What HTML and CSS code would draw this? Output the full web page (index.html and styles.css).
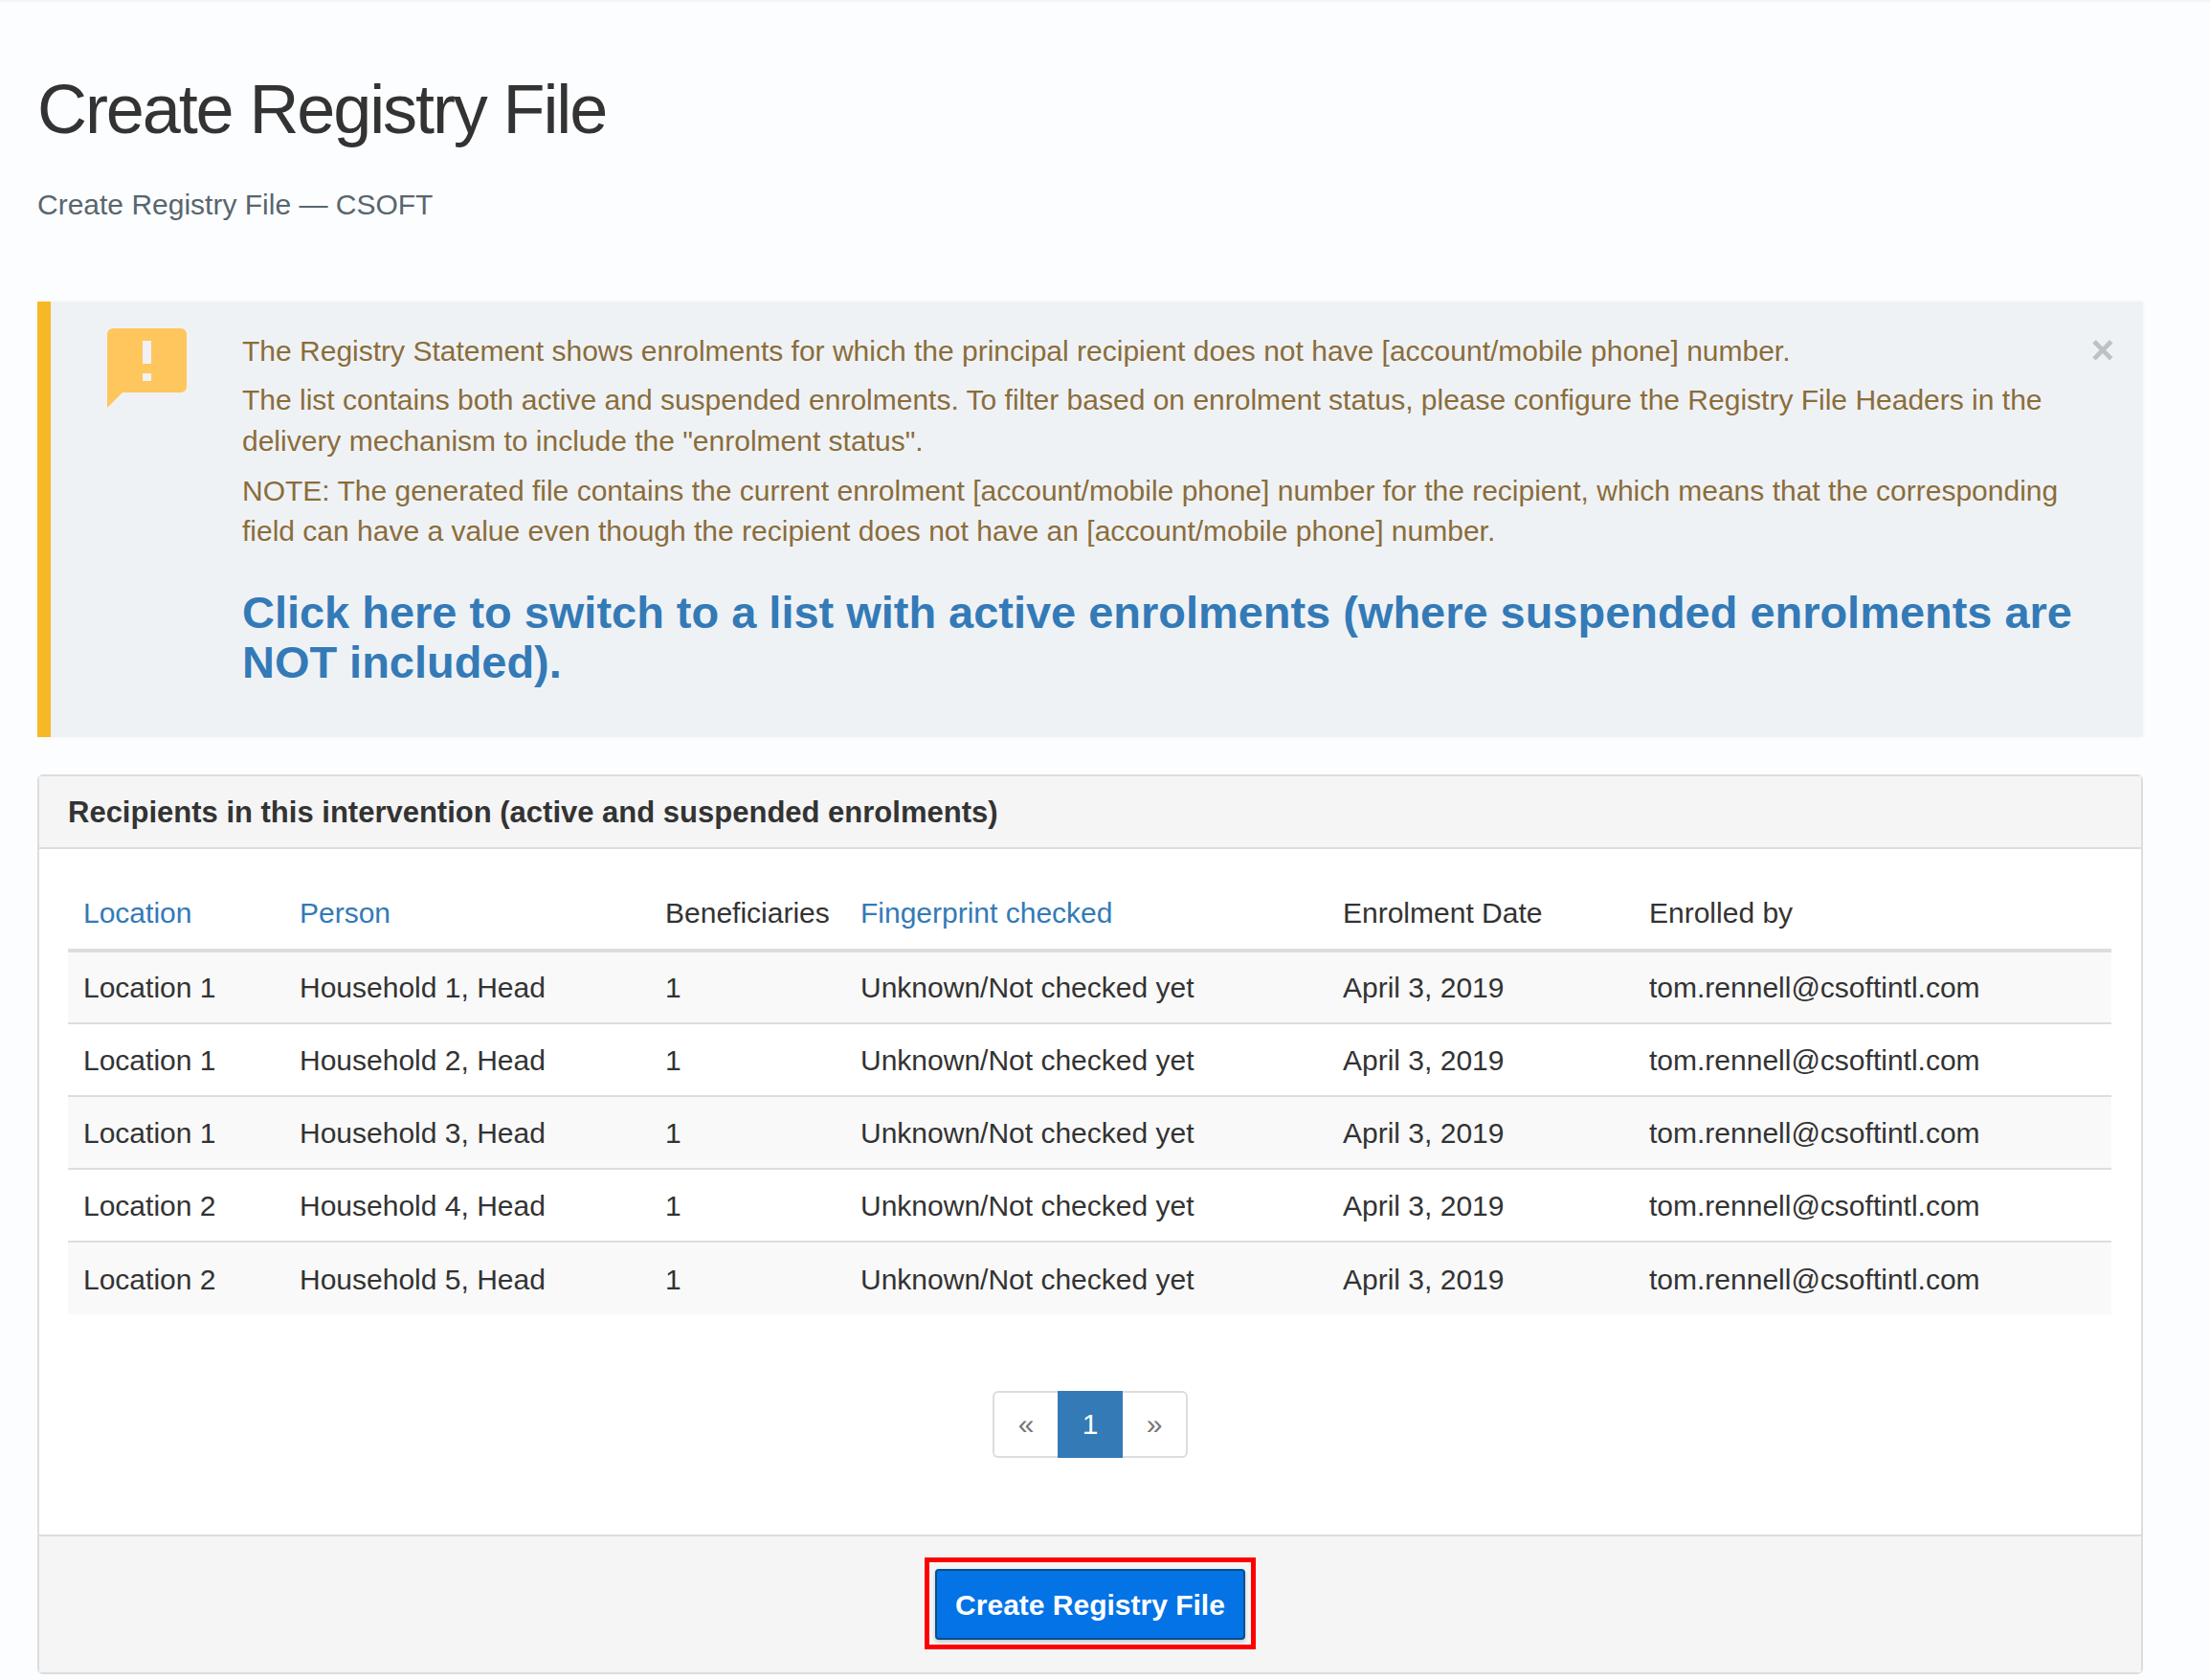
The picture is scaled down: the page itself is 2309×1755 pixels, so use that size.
FILE: index.html
```html
<!DOCTYPE html>
<html lang="en">
<head>
<meta charset="utf-8">
<title>Create Registry File</title>
<link rel="stylesheet" href="styles.css">
</head>
<body>
<main class="page">
  <h1 class="title">Create Registry File</h1>
  <p class="subtitle">Create Registry File — CSOFT</p>

  <section class="alert">
    <svg class="alert-icon" viewBox="0 0 83 83" aria-hidden="true">
      <path class="icon-bubble" d="M6 0H77A6 6 0 0 1 83 6V61A6 6 0 0 1 77 67H16L0 83V6A6 6 0 0 1 6 0Z"/>
      <rect class="icon-mark" x="37" y="13" width="9" height="24"/>
      <rect class="icon-mark" x="37" y="47" width="9" height="8"/>
    </svg>
    <div class="alert-body">
      <p class="alert-text">The Registry Statement shows enrolments for which the principal recipient does not have [account/mobile phone] number.</p>
      <p class="alert-text">The list contains both active and suspended enrolments. To filter based on enrolment status, please configure the Registry File Headers in the delivery mechanism to include the "enrolment status".</p>
      <p class="alert-text">NOTE: The generated file contains the current enrolment [account/mobile phone] number for the recipient, which means that the corresponding field can have a value even though the recipient does not have an [account/mobile phone] number.</p>
      <h3 class="alert-link"><a href="#">Click here to switch to a list with active enrolments (where suspended enrolments are NOT included).</a></h3>
    </div>
    <span class="close">×</span>
  </section>

  <section class="panel">
    <header class="panel-head">Recipients in this intervention (active and suspended enrolments)</header>
    <div class="panel-body">
      <table class="grid">
        <colgroup>
          <col class="c1"><col class="c2"><col class="c3"><col class="c4"><col class="c5"><col class="c6">
        </colgroup>
        <thead>
          <tr>
            <th><a href="#">Location</a></th>
            <th><a href="#">Person</a></th>
            <th>Beneficiaries</th>
            <th><a href="#">Fingerprint checked</a></th>
            <th>Enrolment Date</th>
            <th>Enrolled by</th>
          </tr>
        </thead>
        <tbody>
          <tr><td>Location 1</td><td>Household 1, Head</td><td>1</td><td>Unknown/Not checked yet</td><td>April 3, 2019</td><td>tom.rennell@csoftintl.com</td></tr>
          <tr><td>Location 1</td><td>Household 2, Head</td><td>1</td><td>Unknown/Not checked yet</td><td>April 3, 2019</td><td>tom.rennell@csoftintl.com</td></tr>
          <tr><td>Location 1</td><td>Household 3, Head</td><td>1</td><td>Unknown/Not checked yet</td><td>April 3, 2019</td><td>tom.rennell@csoftintl.com</td></tr>
          <tr><td>Location 2</td><td>Household 4, Head</td><td>1</td><td>Unknown/Not checked yet</td><td>April 3, 2019</td><td>tom.rennell@csoftintl.com</td></tr>
          <tr><td>Location 2</td><td>Household 5, Head</td><td>1</td><td>Unknown/Not checked yet</td><td>April 3, 2019</td><td>tom.rennell@csoftintl.com</td></tr>
        </tbody>
      </table>
      <nav class="pager">
        <a class="page-item first" href="#">«</a>
        <a class="page-item active" href="#">1</a>
        <a class="page-item last" href="#">»</a>
      </nav>
    </div>
    <footer class="panel-foot">
      <div class="highlight"><button class="primary" type="button">Create Registry File</button></div>
    </footer>
  </section>
</main>
</body>
</html>
```
FILE: styles.css
```css
* { box-sizing: border-box; }
html, body { margin: 0; }
body {
  background: #fcfdff;
  color: #333;
  font-family: "Liberation Sans", Arial, sans-serif;
  font-size: 30px;
  border-top: 2px solid #f3f4f6;
  min-height: 1755px;
}
a { color: #337ab7; text-decoration: none; }
.page { padding: 0 70px 0 39px; }
.title {
  margin: 0;
  padding-top: 73px;
  font-size: 72px;
  line-height: 79px;
  font-weight: 400;
  letter-spacing: -2.1px;
}
.subtitle {
  margin: 39px 0 0;
  font-size: 30px;
  line-height: 42px;
  color: #58666e;
}
.alert {
  position: relative;
  display: flex;
  margin-top: 80px;
  height: 455px;
  padding: 31px 70px 0 59px;
  background: #eff2f5;
  border-left: 14px solid #f6b827;
  box-shadow: 0 0 4px rgba(0,0,0,.04);
}
.alert-icon { flex: none; width: 83px; height: 83px; margin: -3px 58px 0 0; }
.icon-bubble { fill: #fec65c; }
.icon-mark { fill: #f0f2f5; }
.alert-body { flex: 1; min-width: 0; }
.alert-text { margin: 0 0 8.5px; font-size: 30px; line-height: 42.84px; color: #8a6d3b; }
.alert-link { margin: 37px 0 0; font-size: 46.95px; line-height: 52px; font-weight: 700; }
.close {
  position: absolute;
  top: 30px;
  right: 30px;
  font-size: 42px;
  line-height: 1;
  font-weight: 700;
  color: #000;
  opacity: .2;
}
.panel {
  margin-top: 39px;
  height: 940px;
  display: flex;
  flex-direction: column;
  background: #fff;
  border: 2px solid #ddd;
  border-radius: 6px;
}
.panel-head {
  height: 76px;
  padding: 2px 30px 0;
  display: flex;
  align-items: center;
  background: #f5f5f5;
  border-bottom: 2px solid #ddd;
  font-size: 31px;
  font-weight: 700;
}
.panel-body { flex: 1; padding: 30px 30px 0; }
.grid { width: 2135px; table-layout: fixed; border-collapse: collapse; }
.c1 { width: 226px; }
.c2 { width: 382px; }
.c3 { width: 204px; }
.c4 { width: 504px; }
.c5 { width: 320px; }
.c6 { width: 499px; }
.grid th {
  height: 76px;
  padding: 0 16px;
  text-align: left;
  font-weight: 400;
  border-bottom: 4px solid #ddd;
  white-space: nowrap;
}
.grid td { height: 76px; padding: 2px 16px 0; border-top: 2px solid #ddd; white-space: nowrap; }
.grid tbody tr:first-child td { border-top: 0; padding-top: 0; }
.grid tbody tr:nth-child(odd) { background: #f9f9f9; }
.pager { display: flex; justify-content: center; margin-top: 80px; }
.page-item {
  width: 68px;
  height: 70px;
  display: flex;
  align-items: center;
  justify-content: center;
  color: #777;
  background: #fff;
  border: 2px solid #ddd;
}
.page-item.first { border-radius: 6px 0 0 6px; border-right: 0; }
.page-item.last { border-radius: 0 6px 6px 0; border-left: 0; }
.page-item.active { background: #337ab7; border-color: #337ab7; color: #fff; }
.panel-foot {
  height: 144px;
  padding-top: 22px;
  display: flex;
  justify-content: center;
  align-items: flex-start;
  background: #f5f5f5;
  border-top: 2px solid #ddd;
}
.highlight { border: 5px solid #f00; padding: 7px 6px 5px; }
.primary {
  display: block;
  width: 324px;
  height: 74px;
  padding: 2px 0 0;
  background: #0473e6;
  color: #fff;
  font-family: inherit;
  font-size: 30px;
  font-weight: 700;
  border: 2px solid #064f8f;
  border-radius: 4px;
  box-shadow: 0 2px 4px rgba(0,0,0,.2);
}
```
